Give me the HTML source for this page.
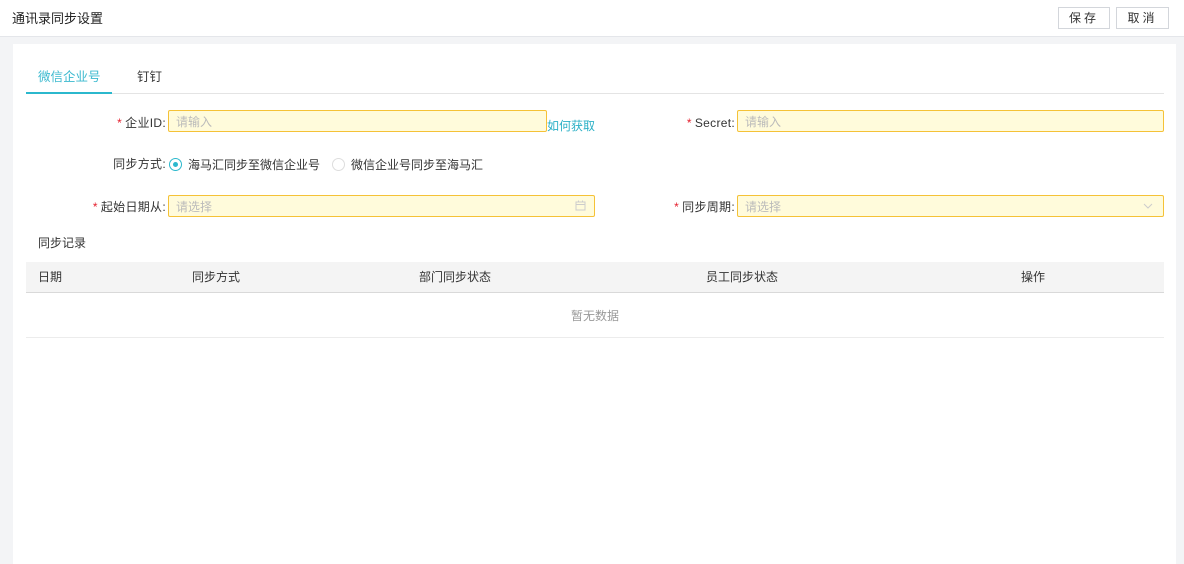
<!DOCTYPE html>
<html><head><meta charset="utf-8"><style>
*{box-sizing:border-box;margin:0;padding:0}
body{width:1184px;height:556px;background:#f3f4f6;font-family:"Liberation Sans","Noto Sans CJK SC",sans-serif;font-size:12px;color:#333;position:relative;overflow:hidden}
.a{position:absolute}
.hdr{left:0;top:0;width:1184px;height:37px;background:#fff;border-bottom:1px solid #e4e6ea}
.btn{top:7px;height:22px;border:1px solid #d3d6db;background:#fff;font-size:12px;line-height:20px;text-align:center;letter-spacing:3px;color:#333}
.card{left:13px;top:44px;width:1163px;height:520px;background:#fff}
.inp{height:22px;border:1px solid #f5c237;background:#fffbdb;border-radius:2px;color:#bbb;padding-left:7px;line-height:22px}
.lbl{text-align:right;line-height:22px;color:#333;letter-spacing:0.3px}
.star{color:#e5202e;margin-right:3px}
.th{top:262px;left:26px;width:1138px;height:31px;background:#f4f4f4;border-bottom:1px solid #d9d9d9}
.th span{position:absolute;top:0;line-height:30px}
</style></head><body>
<div class="a hdr"></div>
<div class="a" style="left:12px;top:8px;font-size:13px;color:#222">通讯录同步设置</div>
<div class="a btn" style="left:1058px;width:52px">保存</div>
<div class="a btn" style="left:1116px;width:53px">取消</div>
<div class="a card"></div>
<div class="a" style="left:38px;top:66px;color:#3bb9cf;font-size:12.5px">微信企业号</div>
<div class="a" style="left:137px;top:66px;color:#333;font-size:12.5px">钉钉</div>
<div class="a" style="left:26px;top:93px;width:1138px;height:1px;background:#e4e4e4"></div>
<div class="a" style="left:26px;top:92px;width:86px;height:2px;background:#2bb8cd"></div>

<div class="a lbl" style="left:60px;top:112px;width:106px"><span class="star">*</span>企业ID:</div>
<div class="a inp" style="left:168px;top:110px;width:379px">请输入</div>
<div class="a" style="left:547px;top:117px;color:#2bb0c6">如何获取</div>
<div class="a lbl" style="left:630px;top:112px;width:105px"><span class="star">*</span>Secret:</div>
<div class="a inp" style="left:737px;top:110px;width:427px">请输入</div>

<div class="a lbl" style="left:60px;top:153px;width:106px">同步方式:</div>
<div class="a" style="left:169px;top:158px;width:13px;height:13px;border:1px solid #2bb8cd;border-radius:50%"><div style="margin:3px;width:5px;height:5px;border-radius:50%;background:#2bb8cd"></div></div>
<div class="a" style="left:188px;top:156px">海马汇同步至微信企业号</div>
<div class="a" style="left:332px;top:158px;width:13px;height:13px;border:1px solid #ddd;border-radius:50%"></div>
<div class="a" style="left:351px;top:156px">微信企业号同步至海马汇</div>

<div class="a lbl" style="left:60px;top:196px;width:106px"><span class="star">*</span>起始日期从:</div>
<div class="a inp" style="left:168px;top:195px;width:427px">请选择</div>
<svg class="a" style="left:575px;top:200px" width="11" height="11" viewBox="0 0 11 11"><rect x="1" y="2" width="9" height="8" fill="none" stroke="#ccc"/><line x1="1" y1="4.5" x2="10" y2="4.5" stroke="#ccc"/><line x1="3.5" y1="0.5" x2="3.5" y2="2.5" stroke="#ccc"/><line x1="7.5" y1="0.5" x2="7.5" y2="2.5" stroke="#ccc"/></svg>
<div class="a lbl" style="left:630px;top:196px;width:105px"><span class="star">*</span>同步周期:</div>
<div class="a inp" style="left:737px;top:195px;width:427px">请选择</div>
<svg class="a" style="left:1143px;top:203px" width="10" height="6" viewBox="0 0 10 6"><path d="M1 1L5 5L9 1" fill="none" stroke="#ccc"/></svg>

<div class="a" style="left:38px;top:234px">同步记录</div>
<div class="a th"><span style="left:12px">日期</span><span style="left:166px">同步方式</span><span style="left:393px">部门同步状态</span><span style="left:680px">员工同步状态</span><span style="left:995px">操作</span></div>
<div class="a" style="left:26px;top:307px;width:1138px;text-align:center;color:#999">暂无数据</div>
<div class="a" style="left:26px;top:337px;width:1138px;height:1px;background:#ececec"></div>
</body></html>
